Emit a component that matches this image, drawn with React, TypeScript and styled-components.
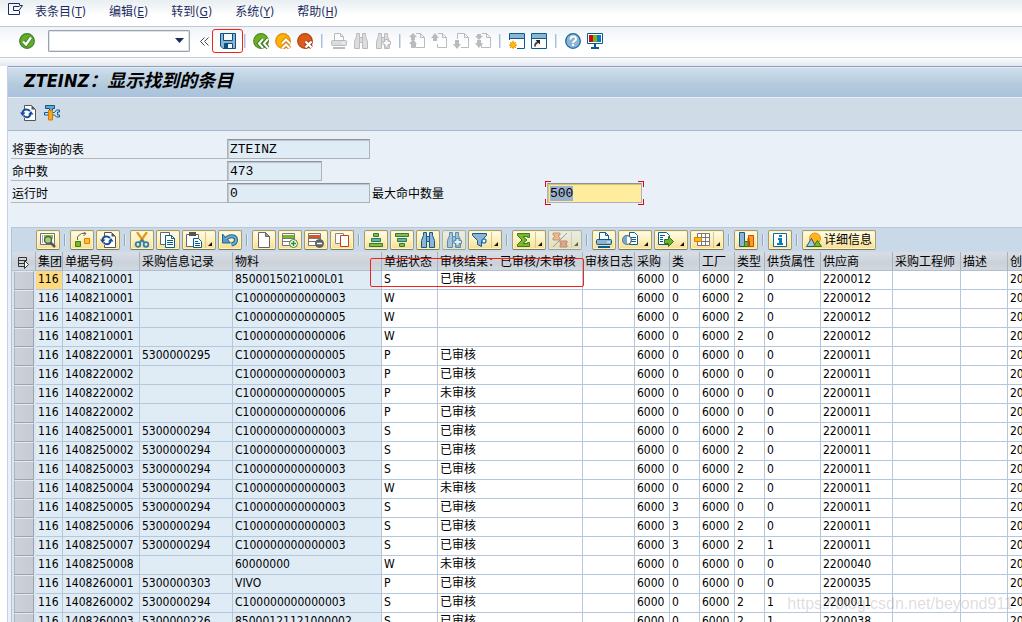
import React, { useEffect, useRef } from "react";
import styled, { createGlobalStyle, css } from "styled-components";

const sans = `"DejaVu Sans Condensed", "Noto Sans CJK SC", sans-serif`;
const mono = `"Liberation Mono", "Noto Sans CJK SC", monospace`;

const GlobalStyle = createGlobalStyle`
  *, *::before, *::after { box-sizing: border-box; }
  body { margin: 0; background: #fff; color: #000; font: 12px/16px ${sans}; }
  button, input, select { font: inherit; color: inherit; margin: 0; padding: 0; }
`;

/* ---------- shell ---------- */

const Window = styled.div`
  display: flex;
  flex-direction: column;
  height: 100vh;
  overflow: hidden;
  position: relative;
`;

const MenuBar = styled.nav`
  display: flex;
  flex: none;
  align-items: center;
  gap: 23px;
  height: 27px;
  padding: 0 8px 2px;
  border-bottom: 1px solid #bfc9d6;
  background: linear-gradient(#e8eef1, #fff 60%);
`;

const MenuButton = styled.button`
  border: 0;
  background: none;
  color: #1c2b5e;
  white-space: nowrap;
`;

const SystemMenu = styled(MenuButton)`
  display: flex;
  width: 16px;
  height: 20px;
  margin-right: -12px;
`;

const Toolbar = styled.div`
  display: flex;
  flex: none;
  align-items: center;
  height: 31px;
  padding: 0 19px 2px;
  border-bottom: 1px solid #c6cdd5;
  background: linear-gradient(#eff3f7, #fff 60%);
`;

const ToolButton = styled.button`
  display: flex;
  flex: none;
  align-items: center;
  justify-content: center;
  width: 22px;
  height: 22px;
  border: 0;
  background: none;
`;

const SaveButton = styled(ToolButton)`
  width: 31px;
  height: 24px;
  margin: 0 1px 0 3px;
  border: 1px solid #f32218;
  border-radius: 3px;
`;

const CommandField = styled.select`
  flex: none;
  width: 142px;
  height: 22px;
  margin: 0 10px 0 13px;
  border: 1px solid #9aa2ab;
  border-radius: 1px;
  outline: 1px solid #dfe3e8;
  outline-offset: -2px;
  appearance: none;
  background: #fff;
`;

const CommandBox = styled.div`
  position: relative;
  display: flex;
`;

const CommandArrow = styled.svg`
  position: absolute;
  right: 16px;
  top: 8px;
  pointer-events: none;
`;

const CollapseButton = styled.button`
  display: flex;
  align-items: center;
  width: 9px;
  height: 22px;
  border: 0;
  background: none;
`;

const Separator = styled.span<{ $gap: number; $tone?: string }>`
  flex: none;
  width: 2px;
  height: 14px;
  margin: 0 ${(p) => p.$gap}px;
  border-left: 1px solid ${(p) => p.$tone ?? "#a9bfda"};
  border-right: 1px solid ${(p) => p.$tone ?? "#d5e1ee"};
`;

const Strip = styled.div`
  flex: none;
  height: 8px;
  background: linear-gradient(#fbfcfd, #e2e8ef);
`;

const Screen = styled.main`
  display: flex;
  flex: 1;
  flex-direction: column;
  min-height: 0;
  margin-left: 7px;
  border-left: 1px solid #c3d1e2;
  background: #e9f0f7;
`;

const TitleBar = styled.header`
  display: flex;
  flex: none;
  align-items: center;
  height: 32px;
  padding: 0 16px 3px;
  border-top: 1px solid #8da0b8;
  border-bottom: 1px solid #e6eff8;
  background: linear-gradient(#e3edf7 1px, #cfdeec 1px, #b4cadc 60%, #a9c2dc);
`;

const Title = styled.h1`
  margin: 0;
  font-size: 18px;
  line-height: 24px;
  font-style: italic;
  font-weight: 700;
  white-space: nowrap;
`;

const AppBar = styled.div`
  display: flex;
  flex: none;
  align-items: center;
  gap: 2px;
  height: 33px;
  padding: 0 9px 3px;
  border-bottom: 1px solid #a8b8cc;
  background: #cfdce7;
`;

/* ---------- selection form ---------- */

const Form = styled.form`
  display: flex;
  flex: none;
  flex-direction: column;
  gap: 2px;
  padding: 8px 3px 24px;
`;

const FormRow = styled.div`
  display: flex;
  height: 20px;
`;

const Label = styled.label`
  width: 216px;
  padding: 3px 0 0 1px;
  border-bottom: 1px solid #b3b6ba;
  white-space: nowrap;
`;

const PlainLabel = styled(Label)`
  width: 177px;
  padding-left: 2px;
  border-bottom: 0;
`;

const Field = styled.input<{ $short?: boolean }>`
  width: ${(p) => (p.$short ? 95 : 143)}px;
  height: 20px;
  padding: 0 2px;
  border: 1px solid #aeb2b6;
  border-top-color: #8e9296;
  border-radius: 0;
  outline: 0;
  background: #dfebf5;
  box-shadow: inset 1px 1px 1px #b9c6d1;
  font: 13px/18px ${mono};
`;

const HotField = styled(Field)`
  display: block;
  background: #ffec9c;
  box-shadow: inset 1px 1px 1px #cfc07c;
  &::selection { background: #9ab0cf; color: #000; }
`;

const FocusFrame = styled.div`
  position: relative;
  &::before, &::after {
    content: "";
    position: absolute;
    inset: -2px;
    pointer-events: none;
    background:
      linear-gradient(#dd0a0a, #dd0a0a) 0 0 / 6px 1px,
      linear-gradient(#dd0a0a, #dd0a0a) 0 0 / 1px 6px,
      linear-gradient(#dd0a0a, #dd0a0a) 100% 100% / 6px 1px,
      linear-gradient(#dd0a0a, #dd0a0a) 100% 100% / 1px 6px;
    background-repeat: no-repeat;
  }
  &::after { transform: scaleX(-1); }
`;

/* ---------- grid ---------- */

const Grid = styled.section`
  position: relative;
  display: flex;
  flex: 1;
  flex-direction: column;
  min-height: 0;
  margin-left: 3px;
  border-left: 1px solid #b4c4d8;
  overflow: hidden;
`;

const GridBar = styled.div`
  display: flex;
  flex: none;
  align-items: center;
  gap: 10px;
  height: 25px;
  padding: 0 24px;
  border-top: 1px solid #b8c8da;
  background: #c9d9e8;
`;

const Group = styled.div<{ $divided?: boolean }>`
  position: relative;
  display: flex;
  gap: 2px;
  ${(p) => p.$divided && css`
    &::before {
      content: "";
      position: absolute;
      left: -6px;
      top: 4px;
      height: 12px;
      border-left: 1px solid #97a5b5;
      border-right: 1px solid #e3ecf5;
    }
  `}
`;

const GridButton = styled.button<{ $menu?: boolean; $split?: boolean; $text?: boolean }>`
  display: flex;
  flex: none;
  align-items: center;
  gap: 2px;
  position: relative;
  width: ${(p) => (p.$text ? 74 : p.$menu ? 34 : 24)}px;
  height: 20px;
  padding: 0 3px;
  border: 1px solid #a39a72;
  border-bottom-color: #7d775c;
  border-radius: 2px;
  background: linear-gradient(#fffce9, #fdf0bd 50%, #f6de92);
  box-shadow: inset 0 0 0 1px #fff3c4;
  white-space: nowrap;
  &:disabled { opacity: .6; color: #000; }
  ${(p) => p.$menu && css`
    &::after {
      content: "";
      position: absolute;
      right: 3px;
      bottom: 3px;
      border: solid transparent;
      border-width: 4px 0 0 4px;
      border-bottom: 4px solid #111;
      border-top: 0;
    }
  `}
  ${(p) => p.$split && css`
    &::before {
      content: "";
      position: absolute;
      right: 9px;
      top: 1px;
      bottom: 1px;
      border-left: 1px solid #d6c992;
    }
  `}
`;

const Table = styled.table`
  width: 100%;
  table-layout: fixed;
  border-collapse: separate;
  border-spacing: 0;
`;

const HeadCell = styled.th`
  height: 19px;
  padding: 1px 0 0 2px;
  border-right: 1px solid #a5b2c1;
  border-bottom: 1px solid #aebfd2;
  background: linear-gradient(#d9dee5, #cbd1d9 60%, #d3d8df);
  font-weight: 400;
  line-height: 16px;
  text-align: left;
  white-space: nowrap;
  overflow: hidden;
  &:last-child { border-right: 0; }
`;

const CornerCell = styled(HeadCell)`
  padding: 2px 0 0 5px;
  svg { display: block; }
`;

const Cell = styled.td<{ $key?: boolean; $hot?: boolean }>`
  height: 19px;
  padding: 0 0 2px 2px;
  border-right: 1px solid #b5c7da;
  border-bottom: 1px solid #b5c7da;
  background: ${(p) => (p.$hot ? "#ffd980" : p.$key ? "#dfebf5" : "#fff")};
  white-space: nowrap;
  overflow: hidden;
  &:last-child { border-right: 0; }
`;

const SelectCell = styled.td`
  height: 19px;
  padding: 0 2px;
  background: #dbe5ef;
`;

const RowSelector = styled.button`
  display: block;
  width: 20px;
  height: 19px;
  border: 1px solid #9aa5b3;
  border-top-color: #e6eaef;
  border-left-color: #aab4c0;
  background: linear-gradient(90deg, #cdd2d9, #c6cbd4);
`;

const Marker = styled.div`
  position: absolute;
  left: 358px;
  top: 31px;
  width: 214px;
  height: 29px;
  border: 1px solid #f32218;
  border-radius: 2px;
  pointer-events: none;
`;

const Watermark = styled.span`
  position: absolute;
  right: 9px;
  bottom: 9px;
  color: rgba(150, 150, 155, 0.32);
  font: 16px/18px "Liberation Sans", sans-serif;
  white-space: nowrap;
  pointer-events: none;
`;

/* ---------- icons ---------- */

const Icon = ({ children }: { children: React.ReactNode }) => (
  <svg width="16" height="16" viewBox="0 0 16 16" fill="none" aria-hidden="true">{children}</svg>
);

const blue = "#0b5c8e";
const grey = "#b9bbbd";
const pale = "#dcdcdc";

const CheckIcon = () => (
  <Icon>
    <circle cx="8" cy="8" r="7.3" fill="#62ad28" stroke="#3f7f2a" strokeWidth="1.2" />
    <path d="M4 8.5 7 11.5 12 4.5" stroke="#3f7f2a" strokeWidth="4" />
    <path d="M4 8.5 7 11.5 12 4.5" stroke="#fff" strokeWidth="2.4" />
  </Icon>
);
const SaveIcon = () => (
  <Icon>
    <path d="M.5.5h15v15H3L.5 13z" fill="#8fb4d3" stroke="#0b517f" />
    <path d="M3.5.5h9v7h-9z" fill="#f4f7fa" stroke="#0b517f" />
    <path d="M4.5 10.5h8v5h-8z" fill="#f4f7fa" stroke="#0b517f" />
    <path d="M5 11h3v4H5z" fill="#0b517f" />
  </Icon>
);
const BackIcon = () => (
  <Icon>
    <circle cx="8" cy="8" r="7.3" fill="#6fb01e" stroke="#4c8a22" strokeWidth="1.2" />
    <path d="M10 6 6 10.500l4 4.500M15 6l-4 4.500 4 4.500" stroke="#3e7b22" strokeWidth="4" />
    <path d="M10 6 6 10.500l4 4.500M15 6l-4 4.500 4 4.500" stroke="#fff" strokeWidth="2" />
  </Icon>
);
const ExitIcon = () => (
  <Icon>
    <circle cx="8" cy="8" r="7.3" fill="#ffb400" stroke="#e08a12" strokeWidth="1.2" />
    <path d="M7 10.500l4-4 4 4M7 15.500l4-4 4 4" stroke="#d9820f" strokeWidth="4" />
    <path d="M7 10.500l4-4 4 4M7 15.500l4-4 4 4" stroke="#fff" strokeWidth="2" />
  </Icon>
);
const CancelIcon = () => (
  <Icon>
    <circle cx="8" cy="8" r="7.3" fill="#dc5b16" stroke="#ad4216" strokeWidth="1.2" />
    <path d="M8.500 8.500l6 6M14.500 8.500l-6 6" stroke="#9c3a12" strokeWidth="4" />
    <path d="M8.500 8.500l6 6M14.500 8.500l-6 6" stroke="#fff" strokeWidth="2.4" />
  </Icon>
);
const PrintIcon = ({ off }: { off?: boolean }) => {
  const line = off ? grey : blue;
  return (
    <Icon>
      <path d="M3.500 8V.5h6l3 3V8" fill="#fdfdfd" stroke={line} />
      <path d="M9.500.5v3h3" stroke={line} />
      <rect x=".5" y="7.5" width="15" height="5" rx="1" fill={off ? pale : "#8fb4d3"} stroke={line} />
      <path d="M11 10h3" stroke="#fff" />
      <path d="M2 15h12" stroke={line} strokeWidth="2" />
    </Icon>
  );
};
const FindIcon = ({ off, next }: { off?: boolean; next?: boolean }) => {
  const line = off ? grey : blue;
  const fill = off ? pale : "#8fb4d3";
  return (
    <Icon>
      <path d="M3.500.5h3v4h3v-4h3v3l2 5v7h-5v-6h-3v6h-5v-7l2-5z" fill={fill} stroke={line} />
      <path d="M6.500 4.500v5M9.500 4.500v5" stroke={line} />
      {next && <path d="M10 6.500h3v2h2.500v3H13V14h-3v-2.500H8v-3h2z" fill="#fafafa" stroke={line} />}
    </Icon>
  );
};
const PageIcon = ({ dir }: { dir: "first" | "prev" | "next" | "last" }) => (
  <Icon>
    <path d={dir === "next" ? "M4.500 6V.5h7l4 4v10H8" : "M7 .5h4.500l4 4v10h-9V11"} stroke={grey} />
    <path d="M11.500.5v4h4" stroke={grey} />
    {dir === "prev" && <path d="M4 0l4 5H6v3H2V5H0z" fill={grey} />}
    {dir === "next" && <path d="M4 16l4-5H6V7H2v4H0z" fill={grey} />}
    {dir === "first" && <path d="M4 0l4 4H6v3H2V4H0zM4 6l4 5H6v4H2v-4H0z" fill={grey} />}
    {dir === "last" && <path d="M4 7l4-4H6V1H2v2H0zM4 15l4-5H6V7H2v3H0z" fill={grey} />}
  </Icon>
);
const SessionIcon = ({ shortcut }: { shortcut?: boolean }) => (
  <Icon>
    <path d="M.5.5h15v15H.5z" fill="#fff" stroke={blue} />
    <path d="M1 1h14v4H1z" fill="#8fb4d3" />
    <path d="M0 5.500h16" stroke={blue} />
    {shortcut ? (
      <>
        <path d="M4 13.500c0-3 1-4 3.500-4.500" stroke="#444" strokeWidth="1.8" />
        <path d="M4.500 7H9v4.500z" fill="#222" />
      </>
    ) : (
      <>
        <path d="M0 7h8v9H0z" fill="#fff" />
        <circle cx="4" cy="12" r="2.5" fill="#ffc107" stroke="#f29400" />
        <path d="M4 7.500v2M4 14.500v1.500M0 12h1.500M6.500 12h1.500M1 9l1 1M6 10l1-1M1 15l1-1M6 14l1 1" stroke="#f29400" />
      </>
    )}
  </Icon>
);
const HelpIcon = () => (
  <Icon>
    <circle cx="8" cy="8" r="7.3" fill="#8db4d6" stroke="#1a6b99" strokeWidth="1.3" />
    <path d="M5.500 6.500c0-4 5.500-4 5.500-.5 0 2-3 2-3 4" stroke="#fff" strokeWidth="2" />
    <path d="M7 11h2v2H7z" fill="#fff" />
  </Icon>
);
const MonitorIcon = () => (
  <Icon>
    <path d="M.5.5h15v10H.5z" fill="#fff" stroke={blue} />
    <path d="M2 2h4v7H2z" fill="#c60c0c" />
    <path d="M6 2h4v7H6z" fill="#7ab51d" />
    <path d="M10 2h4v7h-4z" fill="#0a7ac0" />
    <path d="M8 11v4M4 15h8" stroke={blue} strokeWidth="2" />
  </Icon>
);
const RefreshIcon = () => (
  <Icon>
    <path d="M4.500 5V.5h7l4 4v11h-11V13" fill="#fff" stroke="#555" />
    <path d="M11.500.5v4h4z" fill="#555" />
    <path d="M2.500 8c.5-4 5-4.500 7.500-2M10.500 9c-.5 4-5 4-7 1.500" stroke="#174f9a" strokeWidth="2" />
    <path d="M0 7.500h5.500L2.500 11zM8 9.500h5.500L11 6z" fill="#174f9a" />
  </Icon>
);
const ToolsIcon = () => (
  <Icon>
    <path d="M1.500.5h9v3h-2v2h-3v-2h-4z" fill="#6ba6c9" stroke={blue} />
    <path d="M.5 7.500h10L12.500 5h3v2h-2v3h2v2h-3l-2-2H.5z" fill="#cfe1ee" stroke={blue} />
    <path d="M4.500 5.500h4v9.500h-4z" fill="#f9a61a" stroke="#cf7d0c" />
  </Icon>
);
const DetailIcon = () => (
  <Icon>
    <path d="M.5 1.500h14v11H.5z" fill="#fff" stroke="#6c7174" />
    <path d="M4 3h9v4H4z" fill="#7fc62e" />
    <path d="M2 4h1M2 6h1M2 8h1M2 10h1" stroke="#555" />
    <circle cx="8" cy="8" r="3.5" fill="#a5d070" stroke="#4f5a5e" strokeWidth="1.4" />
    <path d="M10.500 10.500 15 15" stroke="#4f5a5e" strokeWidth="2.5" />
  </Icon>
);
const CheckEntriesIcon = () => (
  <Icon>
    <path d="M3.500 8V4.500l4-3H12M9.500 0 12 1.500 9.500 4" stroke="#666" />
    <path d="M1.500 9.500h5v5h-5z" fill="#6fba2c" stroke="#3f7d20" />
    <path d="M10.500 6.500h5v5h-5z" fill="#ffc02e" stroke="#e07b0a" />
  </Icon>
);
const CutIcon = () => (
  <Icon>
    <path d="M3 0l7 10M13 0 6 10" stroke="#e8961a" strokeWidth="2.2" />
    <circle cx="4" cy="12.5" r="2.3" stroke="#2b7fb8" strokeWidth="1.8" />
    <circle cx="12" cy="12.5" r="2.3" stroke="#2b7fb8" strokeWidth="1.8" />
    <path d="M6 10.500 8 8l2 2.500" stroke="#2b7fb8" strokeWidth="2" />
  </Icon>
);
const CopyIcon = () => (
  <Icon>
    <path d="M.5.5h9v12H.5z" fill="#fff" stroke="#666" />
    <path d="M5.500 3.500h6l3 3v9h-9z" fill="#fff" stroke={blue} />
    <path d="M11.500 3.500v3h3M7 8.500h6M7 10.500h6M7 12.500h6" stroke={blue} />
  </Icon>
);
const PasteIcon = () => (
  <Icon>
    <path d="M.5 2.500h12v12H.5z" fill="#fff" stroke="#666" />
    <path d="M3 0h7v4H3z" fill="#555" />
    <path d="M7.500 6.500h5l3 3v6h-8z" fill="#fff" stroke={blue} />
    <path d="M9 9.500h3M9 11.500h5M9 13.500h5" stroke={blue} />
  </Icon>
);
const UndoIcon = () => (
  <Icon>
    <path d="M4 7c3-4 10-3.500 10 1 0 2.500-2 4-4.500 4.500" stroke="#1c6692" strokeWidth="4" />
    <path d="M.5 2v9h8z" fill="#5a9cc5" stroke="#1c6692" />
    <path d="M4 7c3-4 10-3.500 10 1 0 2.500-2 4-4.500 4.500" stroke="#6faacf" strokeWidth="2" />
  </Icon>
);
const NewIcon = () => (
  <Icon>
    <path d="M2.500.5h7l4 4v11h-11z" fill="#fff" stroke="#666" />
    <path d="M9.500.5v4h4z" fill="#999" stroke="#666" />
  </Icon>
);
const RowIcon = ({ minus }: { minus?: boolean }) => (
  <Icon>
    <path d="M.5 1.500h12v12H.5z" fill="#fff" stroke="#777" />
    <path d="M1 3h11v3H1z" fill={minus ? "#d9541e" : "#74b82a"} />
    <path d="M0 6.500h13M0 9.500h8" stroke="#777" />
    <circle cx="11.5" cy="11.5" r="4" fill={minus ? "#5c6165" : "#fff"} stroke={minus ? "#5c6165" : "#3c8a2e"} />
    <path d={minus ? "M9 11.500h5" : "M9 11.500h5M11.500 9v5"} stroke={minus ? "#fff" : "#3c8a2e"} strokeWidth="1.5" />
  </Icon>
);
const DuplicateIcon = () => (
  <Icon>
    <path d="M1.500 1.500h8v10h-8z" fill="#fff" stroke="#8a8a8a" />
    <path d="M6.500 3.500h8v11h-8z" fill="#fff" stroke="#cc3c14" />
  </Icon>
);
const SortIcon = ({ down }: { down?: boolean }) => (
  <Icon>
    {down ? (
      <path d="M1.500 1.500h13v3h-13zM3.500 6.500h9v3h-9zM5.500 11.500h5v3h-5z" fill="#82bd4a" stroke="#2f7d3b" />
    ) : (
      <path d="M5.500 1.500h5v3h-5zM3.500 6.500h9v3h-9zM1.500 11.500h13v3h-13z" fill="#82bd4a" stroke="#2f7d3b" />
    )}
    <path d="M4 7h8v2H4z" fill="#6fa8c9" />
  </Icon>
);
const FilterIcon = () => (
  <Icon>
    <path d="M.5 1.500h14v2l-5 5v6l-4-2v-4l-5-5z" fill="#8fb4d3" stroke={blue} />
    <circle cx="12" cy="9" r="2" fill="#fff" stroke="#2c7fb5" strokeWidth="1.4" />
  </Icon>
);
const SumIcon = () => (
  <Icon>
    <path d="M1.500 1.500h12v4h-2v-1H7l4 3.500-4 3.500h4.500v-1h2v4h-12v-2L6 8 1.500 3.500z" fill="#79b82c" stroke="#3b7c22" />
  </Icon>
);
const SubtotalIcon = () => (
  <Icon>
    <path d="M15 1 1 15" stroke="#777" />
    <path d="M1 1h7v2L6 4l2 2v2H1V6l2-2-2-1z" fill="#f5a85c" stroke="#d06a2b" />
    <path d="M8 9h7v2l-2 1 2 1v2H8v-2l2-1-2-1z" fill="#e98a4d" stroke="#c4521e" />
  </Icon>
);
const ViewIcon = () => (
  <Icon>
    <path d="M7.500.5h5l3 3v9h-8z" fill="#fff" stroke={blue} />
    <path d="M9 5.500h5M9 7.500h5M9 9.500h5" stroke={blue} />
    <circle cx="5" cy="8" r="4.3" fill="#fff" stroke="#5d6a75" strokeWidth="1.3" />
    <path d="M5 4a4 4 0 0 0 0 8z" fill="#6fa8d0" />
  </Icon>
);
const ExportIcon = () => (
  <Icon>
    <path d="M.5.5h8l3 3v9H.5z" fill="#fff" stroke={blue} />
    <path d="M2 3.500h5M2 5.500h3M2 7.500h3M2 9.500h3" stroke={blue} />
    <path d="M6.500 7.500h4v-3l5 5-5 5v-3h-4z" fill="#6fb52b" stroke="#37751f" />
  </Icon>
);
const LayoutIcon = () => (
  <Icon>
    <path d="M3.500 1.500h12v12h-12zM3.500 5.500h12M3.500 9.500h12M7.500 1.500v12M11.500 1.500v12" fill="#fff" stroke="#777" />
    <path d="M.5 5.500h7v4h-7z" fill="#fdb913" stroke="#e07b0a" />
  </Icon>
);
const ChartIcon = () => (
  <Icon>
    <path d="M1.500.5h5v14h-5z" fill="#8fb4d3" stroke={blue} />
    <path d="M10.500 3.500h5v11h-5z" fill="#f6a01a" stroke="#cf4a12" />
    <path d="M6.500 9.500h5v5h-5z" fill="#6fb52b" stroke="#37751f" />
    <path d="M10.500 6v8" stroke="#cf4a12" strokeWidth="2" />
  </Icon>
);
const InfoIcon = () => (
  <Icon>
    <path d="M1.500 1.500h13v13h-13z" fill="#fff" stroke="#0a6aa8" />
    <path d="M7 3h3v2H7zM6 6h4v5h1v2H5v-2h2V8H6z" fill="#0a7ac0" />
  </Icon>
);
const PictureIcon = () => (
  <Icon>
    <circle cx="9" cy="6.5" r="5.5" fill="#ffb41e" stroke="#e88f0e" />
    <path d="M.5 14.500l5-8 4 8z" fill="#a7c6df" stroke={blue} />
    <path d="M7.500 14.500l4-6 4 6z" fill="#79b82c" stroke="#37751f" />
  </Icon>
);
const ColumnsIcon = () => (
  <svg width="13" height="13" viewBox="0 0 13 13" fill="none" aria-hidden="true">
    <path d="M9.500 5V1.500h-8v9H7M1.500 4.500h8M1.500 7.500H7" stroke="#333" />
    <path d="M7.500 4.500l4 4-4 4z" fill="#fff" stroke="#333" />
  </svg>
);

/* ---------- data ---------- */

const menus: [string, string][] = [["表条目", "T"], ["编辑", "E"], ["转到", "G"], ["系统", "Y"], ["帮助", "H"]];

const columns: [string, number?][] = [
  ["集团", 27], ["单据号码", 77], ["采购信息记录", 93], ["物料", 149], ["单据状态", 56],
  ["审核结果：已审核/未审核", 145], ["审核日志", 52], ["采购", 35], ["类", 30], ["工厂", 35],
  ["类型", 30], ["供货属性", 56], ["供应商", 72], ["采购工程师", 68], ["描述", 47], ["创建日期"],
];

const material = (n: number) => `C10000000000000${n}`;

type Entry = [doc: string, info: string, item: string, state: string, result: string, cls: string, type: string, attr: string, vendor: string];

const Y = "已审核";
const N = "未审核";
const entries: Entry[] = [
  ["1408210001", "", "8500015021000L01", "S", Y, "0", "2", "0", "2200012"],
  ["1408210001", "", material(3), "W", "", "0", "2", "0", "2200012"],
  ["1408210001", "", material(5), "W", "", "0", "2", "0", "2200012"],
  ["1408210001", "", material(6), "W", "", "0", "2", "0", "2200012"],
  ["1408220001", "5300000295", material(5), "P", Y, "0", "0", "0", "2200011"],
  ["1408220002", "", material(3), "P", Y, "0", "0", "0", "2200011"],
  ["1408220002", "", material(5), "P", N, "0", "0", "0", "2200011"],
  ["1408220002", "", material(6), "P", Y, "0", "0", "0", "2200011"],
  ["1408250001", "5300000294", material(3), "S", Y, "0", "2", "0", "2200011"],
  ["1408250002", "5300000294", material(3), "S", Y, "0", "2", "0", "2200011"],
  ["1408250003", "5300000294", material(3), "S", Y, "0", "2", "0", "2200011"],
  ["1408250004", "5300000294", material(3), "W", N, "0", "2", "0", "2200011"],
  ["1408250005", "5300000294", material(3), "S", Y, "3", "0", "0", "2200011"],
  ["1408250006", "5300000294", material(3), "S", Y, "3", "2", "0", "2200011"],
  ["1408250007", "5300000294", material(3), "S", Y, "3", "2", "1", "2200011"],
  ["1408250008", "", "60000000", "W", N, "0", "0", "0", "2200040"],
  ["1408260001", "5300000303", "VIVO", "P", Y, "0", "0", "0", "2200035"],
  ["1408260002", "5300000294", material(3), "S", Y, "0", "2", "1", "2200011"],
  ["1408260003", "5300000226", "85000121121000002", "S", Y, "0", "2", "1", "2200038"],
];

const toCells = ([doc, info, item, state, result, cls, type, attr, vendor]: Entry) =>
  ["116", doc, info, item, state, result, "", "6000", cls, "6000", type, attr, vendor, "", "", "2014"];

type Action = { name: string; icon: React.ReactNode; menu?: boolean; split?: boolean; off?: boolean };

const gridGroups: Action[][] = [
  [{ name: "明细", icon: <DetailIcon /> }],
  [{ name: "检查条目", icon: <CheckEntriesIcon /> }, { name: "刷新", icon: <RefreshIcon /> }],
  [
    { name: "剪切", icon: <CutIcon /> },
    { name: "复制", icon: <CopyIcon /> },
    { name: "粘贴", icon: <PasteIcon />, menu: true, split: true },
    { name: "撤销", icon: <UndoIcon /> },
  ],
  [
    { name: "新建", icon: <NewIcon /> },
    { name: "插入行", icon: <RowIcon /> },
    { name: "删除行", icon: <RowIcon minus /> },
    { name: "复制行", icon: <DuplicateIcon /> },
  ],
  [
    { name: "升序", icon: <SortIcon /> },
    { name: "降序", icon: <SortIcon down /> },
    { name: "查找", icon: <FindIcon /> },
    { name: "查找下一个", icon: <FindIcon next />, off: true },
    { name: "过滤", icon: <FilterIcon />, menu: true, split: true },
  ],
  [
    { name: "总计", icon: <SumIcon />, menu: true, split: true },
    { name: "小计", icon: <SubtotalIcon />, menu: true, split: true, off: true },
  ],
  [
    { name: "打印", icon: <PrintIcon /> },
    { name: "视图", icon: <ViewIcon />, menu: true },
    { name: "导出", icon: <ExportIcon />, menu: true },
    { name: "布局", icon: <LayoutIcon />, menu: true, split: true },
  ],
  [{ name: "图表", icon: <ChartIcon /> }],
  [{ name: "信息", icon: <InfoIcon /> }],
];

/* ---------- page ---------- */

export default function App() {
  const maxHits = useRef<HTMLInputElement>(null);
  useEffect(() => {
    maxHits.current?.focus();
    maxHits.current?.select();
  }, []);

  return (
    <Window>
      <GlobalStyle />
      <MenuBar>
        <SystemMenu aria-label="系统菜单">
          <svg width="16" height="16" viewBox="0 0 16 16" fill="none" aria-hidden="true">
            <path d="M11.500 9v3.500H.5v-11h11V3M11.500 3.500h3l-3.500 5H5.500v-4h6" stroke="#1c2b5e" />
          </svg>
        </SystemMenu>
        {menus.map(([text, key]) => (
          <MenuButton key={key}>{text}(<u>{key}</u>)</MenuButton>
        ))}
      </MenuBar>

      <Toolbar>
        <CheckIcon />
        <CommandBox>
          <CommandField aria-label="命令"><option /></CommandField>
          <CommandArrow width="9" height="6" viewBox="0 0 9 6">
            <path d="M0 0h9L4.500 5z" fill="#1c2b5e" />
          </CommandArrow>
        </CommandBox>
        <CollapseButton aria-label="收起">
          <svg width="9" height="9" viewBox="0 0 9 9" fill="none" aria-hidden="true">
            <path d="M4.500.5l-4 4 4 4M8.500.5l-4 4 4 4" stroke="#444" />
          </svg>
        </CollapseButton>
        <SaveButton aria-label="保存"><SaveIcon /></SaveButton>
        <Separator $gap={0} />
        <Separator $gap={1} $tone="transparent" />
        <ToolButton aria-label="返回"><BackIcon /></ToolButton>
        <ToolButton aria-label="退出"><ExitIcon /></ToolButton>
        <ToolButton aria-label="取消"><CancelIcon /></ToolButton>
        <Separator $gap={5} />
        <ToolButton aria-label="打印" disabled><PrintIcon off /></ToolButton>
        <ToolButton aria-label="查找" disabled><FindIcon off /></ToolButton>
        <ToolButton aria-label="查找下一个" disabled><FindIcon off next /></ToolButton>
        <Separator $gap={5} />
        <ToolButton aria-label="首页" disabled><PageIcon dir="first" /></ToolButton>
        <ToolButton aria-label="上一页" disabled><PageIcon dir="prev" /></ToolButton>
        <ToolButton aria-label="下一页" disabled><PageIcon dir="next" /></ToolButton>
        <ToolButton aria-label="末页" disabled><PageIcon dir="last" /></ToolButton>
        <Separator $gap={5} />
        <ToolButton aria-label="新会话"><SessionIcon /></ToolButton>
        <ToolButton aria-label="快捷方式"><SessionIcon shortcut /></ToolButton>
        <Separator $gap={5} />
        <ToolButton aria-label="帮助"><HelpIcon /></ToolButton>
        <ToolButton aria-label="本地布局"><MonitorIcon /></ToolButton>
      </Toolbar>
      <Strip />

      <Screen>
        <TitleBar><Title>ZTEINZ：显示找到的条目</Title></TitleBar>
        <AppBar>
          <ToolButton aria-label="刷新"><RefreshIcon /></ToolButton>
          <ToolButton aria-label="设置"><ToolsIcon /></ToolButton>
        </AppBar>

        <Form>
          <FormRow>
            <Label htmlFor="table">将要查询的表</Label>
            <Field id="table" readOnly value="ZTEINZ" />
          </FormRow>
          <FormRow>
            <Label htmlFor="hits">命中数</Label>
            <Field id="hits" readOnly value="473" $short />
          </FormRow>
          <FormRow>
            <Label htmlFor="runtime">运行时</Label>
            <Field id="runtime" readOnly value="0" />
            <PlainLabel htmlFor="max">最大命中数量</PlainLabel>
            <FocusFrame>
              <HotField id="max" ref={maxHits} defaultValue="500" $short />
            </FocusFrame>
          </FormRow>
        </Form>

        <Grid>
          <GridBar>
            {gridGroups.map((group, i) => (
              <Group key={i} $divided={i > 0}>
                {group.map((a) => (
                  <GridButton key={a.name} aria-label={a.name} $menu={a.menu} $split={a.split} disabled={a.off}>
                    {a.icon}
                  </GridButton>
                ))}
              </Group>
            ))}
            <Group $divided>
              <GridButton $text><PictureIcon />详细信息</GridButton>
            </Group>
          </GridBar>
          <Table>
            <colgroup>
              <col width={24} />
              {columns.map(([name, width]) => <col key={name} width={width} />)}
            </colgroup>
            <thead>
              <tr>
                <CornerCell aria-label="选择"><ColumnsIcon /></CornerCell>
                {columns.map(([name]) => <HeadCell key={name} scope="col">{name}</HeadCell>)}
              </tr>
            </thead>
            <tbody>
              {entries.map((entry, r) => (
                <tr key={r}>
                  <SelectCell><RowSelector aria-label={`选择第 ${r + 1} 行`} /></SelectCell>
                  {toCells(entry).map((value, c) => (
                    <Cell key={c} $key={c < 4} $hot={r === 0 && c === 0}>{value}</Cell>
                  ))}
                </tr>
              ))}
            </tbody>
          </Table>
          <Marker />
        </Grid>
      </Screen>
      <Watermark>https://blog.csdn.net/beyond911</Watermark>
    </Window>
  );
}
